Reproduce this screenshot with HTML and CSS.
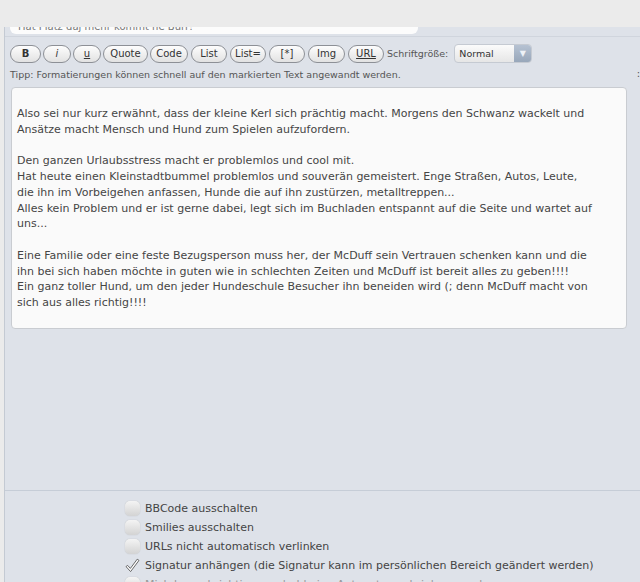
FILE: index.html
```html
<!DOCTYPE html>
<html lang="de">
<head>
  <meta charset="UTF-8" />
  <title>Beitrag schreiben</title>
  <link rel="stylesheet" href="styles.css">
</head>
<body>
  <div class="topbar"></div>

  <div class="panel">
    <div class="subject-field"><span>Hat Platz daj mehr kommt ne Burr!</span></div>

    <div class="toolbar">
      <div class="buttons">
        <button class="bb bb-b">B</button>
        <button class="bb bb-i">i</button>
        <button class="bb bb-u">u</button>
        <button class="bb bb-quote">Quote</button>
        <button class="bb bb-code">Code</button>
        <button class="bb bb-list">List</button>
        <button class="bb bb-list">List=</button>
        <button class="bb bb-list">[*]</button>
        <button class="bb bb-img">Img</button>
        <button class="bb bb-url">URL</button>
        <span class="size-label">Schriftgröße:</span>
        <div class="size-select">
          <span>Normal</span>
          <span class="arrow">&#9660;</span>
        </div>
      </div>
      <div class="tip">Tipp: Formatierungen können schnell auf den markierten Text angewandt werden.</div>
      <span class="edge-char">:</span>
    </div>

    <div class="message">
      <p>Also sei nur kurz erwähnt, dass der kleine Kerl sich prächtig macht. Morgens den Schwanz wackelt und<br>
      Ansätze macht Mensch und Hund zum Spielen aufzufordern.</p>
      <p>Den ganzen Urlaubsstress macht er problemlos und cool mit.<br>
      Hat heute einen Kleinstadtbummel problemlos und souverän gemeistert. Enge Straßen, Autos, Leute,<br>
      die ihn im Vorbeigehen anfassen, Hunde die auf ihn zustürzen, metalltreppen...<br>
      Alles kein Problem und er ist gerne dabei, legt sich im Buchladen entspannt auf die Seite und wartet auf<br>
      uns...</p>
      <p>Eine Familie oder eine feste Bezugsperson muss her, der McDuff sein Vertrauen schenken kann und die<br>
      ihn bei sich haben möchte in guten wie in schlechten Zeiten und McDuff ist bereit alles zu geben!!!!<br>
      Ein ganz toller Hund, um den jeder Hundeschule Besucher ihn beneiden wird (; denn McDuff macht von<br>
      sich aus alles richtig!!!!</p>
    </div>

    <div class="options">
      <label class="option"><span class="check"></span>BBCode ausschalten</label>
      <label class="option"><span class="check"></span>Smilies ausschalten</label>
      <label class="option"><span class="check"></span>URLs nicht automatisch verlinken</label>
      <label class="option"><span class="check checked">
        <svg width="15" height="15" viewBox="0 0 15 15"><path d="M1 8.6 L2.6 7.4 L5.4 10.4 L12.2 1.2 L14 2.4 L5.6 13.6 Z" fill="#fbfbfb" stroke="#5a5a5a" stroke-width="0.9" stroke-linejoin="round"/></svg>
      </span>Signatur anhängen (die Signatur kann im persönlichen Bereich geändert werden)</label>
      <label class="option faded"><span class="check"></span>Mich benachrichtigen, sobald eine Antwort geschrieben wurde</label>
    </div>
  </div>
</body>
</html>
```

FILE: styles.css
```css
body {
  margin: 0;
  background: #ebebeb;
  font-family: "DejaVu Sans", Verdana, sans-serif;
  color: #444;
  overflow: hidden;
}

.topbar {
  height: 27px;
}

.panel {
  margin-left: 4px;
  background: #dee2e9;
  border-left: 1px solid #c4cad3;
  height: 560px;
}

.subject-field {
  width: 400px;
  height: 7px;
  margin-left: 5px;
  background: #fcfcfc;
  border-radius: 0 0 6px 6px;
  overflow: hidden;
  font-size: 10px;
  color: #777;
  padding-left: 8px;
}

.subject-field span {
  display: block;
  margin-top: -6px;
}

.toolbar {
  margin-top: 2px;
  border-top: 1px solid #d0d5dd;
  padding: 7px 0 0 5px;
  height: 42px;
}

.buttons {
  display: flex;
  align-items: center;
  gap: 2px;
}

.bb {
  height: 18px;
  padding: 0;
  border: 1px solid #8d9096;
  border-radius: 9px;
  background: linear-gradient(#fdfdfd, #e2e2e2);
  font-family: "DejaVu Sans", Verdana, sans-serif;
  font-size: 10px;
  color: #333;
  line-height: 16px;
  text-align: center;
}

.bb-b { width: 31px; font-weight: bold; }
.bb-i { width: 28px; font-style: italic; }
.bb-u { width: 28px; text-decoration: underline; }
.bb-quote { width: 45px; }
.bb-code { width: 38px; }
.bb-list { width: 36px; margin-left: 1px; }
.bb-img { width: 37px; margin-left: 1px; }
.bb-url { width: 36px; margin-left: 1px; text-decoration: underline; }

.size-label {
  margin-left: 1px;
  font-size: 9.5px;
  color: #555;
}

.size-select {
  margin-left: 4px;
  width: 76px;
  height: 17px;
  display: flex;
  border: 1px solid #c5cad2;
  border-radius: 4px;
  background: linear-gradient(#fbfbfb, #e6e6e6);
  font-size: 9.5px;
  color: #333;
  overflow: hidden;
}

.size-select span {
  flex: 1;
  line-height: 17px;
  padding-left: 4px;
}

.size-select .arrow {
  flex: 0 0 17px;
  padding: 0;
  background: linear-gradient(#b6c2d2, #98a7ba);
  color: #eef2f7;
  font-size: 8px;
  text-align: center;
}

.tip {
  margin-top: 6px;
  font-size: 9.5px;
  color: #555;
}

.edge-char {
  float: right;
  margin-top: -12px;
  font-size: 10px;
  color: #555;
}

.message {
  margin: 1px 13px 0 6px;
  height: 216px;
  padding: 18px 8px 6px 5px;
  background: #fafafa;
  border: 1px solid #c9ccd1;
  border-radius: 4px;
  font-size: 11px;
  line-height: 15.75px;
  color: #454545;
  white-space: nowrap;
}

.message p {
  margin: 0 0 15.75px;
}

.options {
  margin-top: 161px;
  border-top: 1px solid #c6cdd7;
  padding: 8px 0 0 120px;
}

.option {
  display: flex;
  align-items: center;
  height: 19px;
  font-size: 11px;
  color: #444;
}

.check {
  width: 15px;
  height: 15px;
  margin-right: 5px;
  border-radius: 5px;
  background: linear-gradient(#f4f4f4, #d3d3d3);
  box-shadow: 0 0 1px #aaa;
}

.check.checked {
  background: none;
  box-shadow: none;
}

.faded {
  color: #999;
}
```
